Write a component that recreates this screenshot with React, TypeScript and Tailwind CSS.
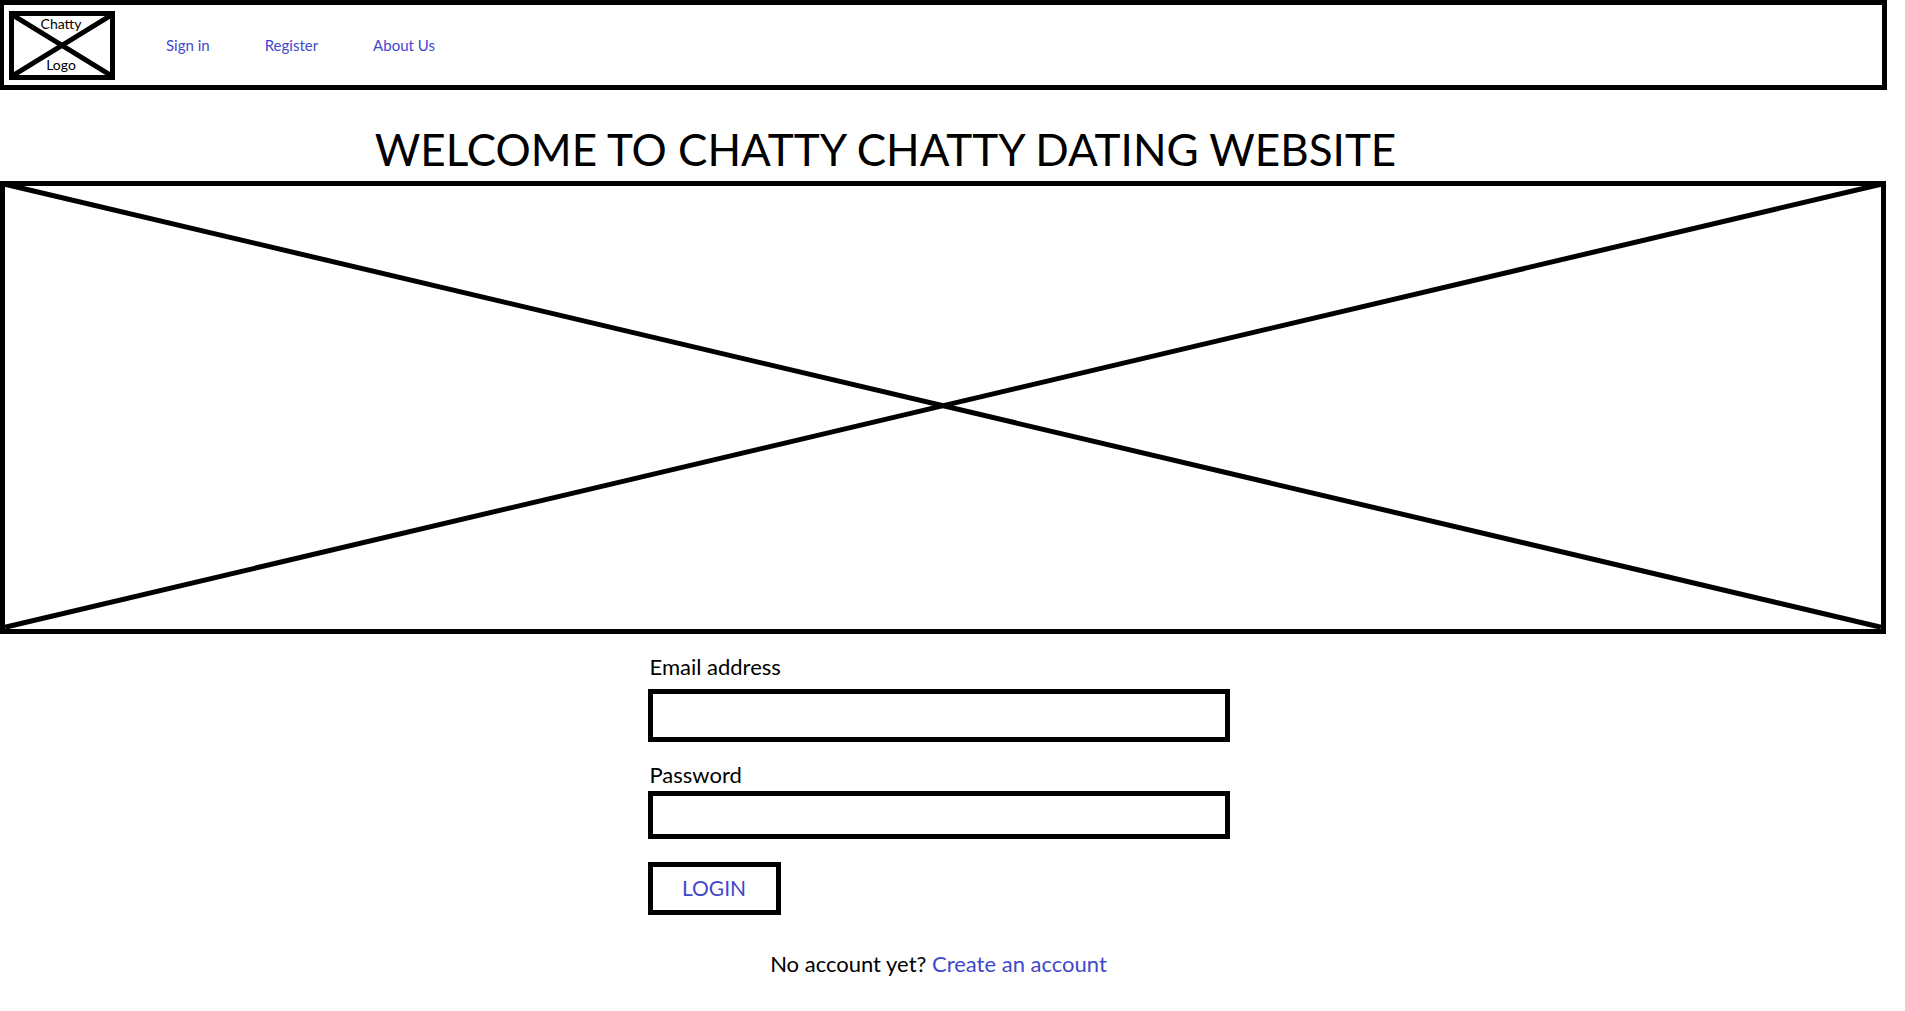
const navLinks = ["Sign in", "Register", "About Us"];

function Cross() {
  return (
    <svg
      className="absolute inset-0 h-full w-full overflow-visible"
      viewBox="0 0 100 100"
      preserveAspectRatio="none"
      stroke="black"
      strokeWidth="5"
      aria-hidden="true"
    >
      <line x1="0" y1="-0.4" x2="100" y2="99.6" vectorEffect="non-scaling-stroke" />
      <line x1="0" y1="99.6" x2="100" y2="-0.4" vectorEffect="non-scaling-stroke" />
    </svg>
  );
}

function Field({ id, label, type, className }: { id: string; label: string; type: string; className: string }) {
  return (
    <>
      <label htmlFor={id} className="block pl-0.5 text-[22px] leading-[26px]">
        {label}
      </label>
      <input id={id} type={type} className={`block w-full border-5 border-black px-3 text-xl outline-none ${className}`} />
    </>
  );
}

export default function App() {
  return (
    <div className="min-h-screen bg-white pr-[18px] font-[Lato,sans-serif] text-black">
      <header className="flex h-[90px] items-center border-5 border-l-4 border-black pl-[5px]">
        <a
          href="#"
          className="relative flex h-[69px] w-[106px] flex-col items-center justify-between border-5 border-black pr-0.5 pb-0.5 text-sm leading-4"
        >
          <Cross />
          <span className="relative">Chatty</span>
          <span className="relative">Logo</span>
        </a>
        <nav className="ml-[51px] flex gap-[55px] text-[15px] text-[#3f48cc]">
          {navLinks.map((link) => (
            <a key={link} href="#">
              {link}
            </a>
          ))}
        </nav>
      </header>

      <main>
        <h1 className="pt-7 pr-[116px] text-center text-[44px] leading-[63px]">
          WELCOME TO CHATTY CHATTY DATING WEBSITE
        </h1>
        <div className="relative mr-px h-[453px] border-5 border-black">
          <Cross />
        </div>

        <form className="mx-auto w-full max-w-[592px] pt-5 pr-2.5" onSubmit={(e) => e.preventDefault()}>
          <Field id="email" label="Email address" type="email" className="mt-[9px] mb-5 h-[53px]" />
          <Field id="password" label="Password" type="password" className="mt-[3px] h-[48px]" />
          <button
            type="submit"
            className="mt-[23px] block h-[53px] w-[133px] border-5 border-black pb-0.5 text-[21px] text-[#3f48cc]"
          >
            LOGIN
          </button>
          <p className="mt-9 text-center text-[22px] leading-[26px]">
            No account yet?{" "}
            <a href="#" className="text-[#3f48cc]">
              Create an account
            </a>
          </p>
        </form>
      </main>
    </div>
  );
}
